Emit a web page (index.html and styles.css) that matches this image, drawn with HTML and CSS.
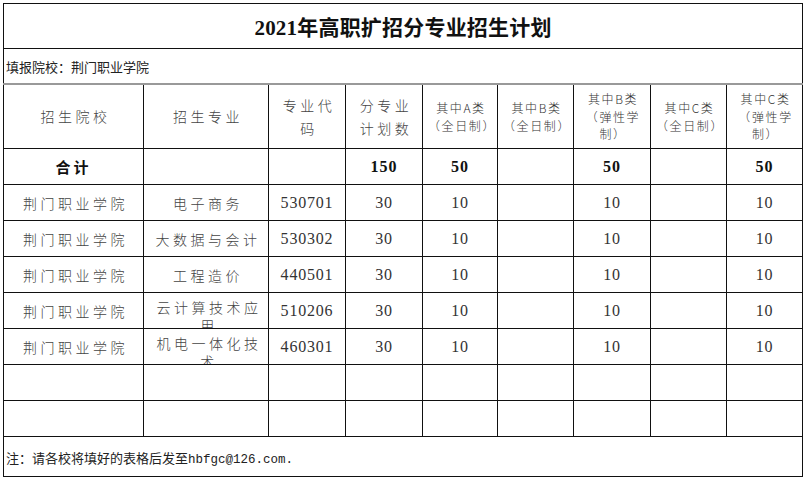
FILE: index.html
```html
<!DOCTYPE html>
<html lang="zh">
<head>
<meta charset="utf-8">
<title>2021年高职扩招分专业招生计划</title>
<link rel="stylesheet" href="styles.css">
</head>
<body>
<div class="sheet">
<table class="plan">
  <colgroup>
    <col class="c1"><col class="c2"><col class="c3"><col class="c4"><col class="c5">
    <col class="c6"><col class="c7"><col class="c8"><col class="c9">
  </colgroup>
  <tr class="r-title"><td colspan="9" class="title">2021年高职扩招分专业招生计划</td></tr>
  <tr class="r-fill"><td colspan="9" class="fill">填报院校：荆门职业学院</td></tr>
  <tr class="r-head">
    <td class="hd">招生院校</td>
    <td class="hd g">招生专业</td>
    <td class="hd g">专业代码</td>
    <td class="hd">分专业计划数</td>
    <td class="hs">其中A类（全日制）</td>
    <td class="hs g">其中B类（全日制）</td>
    <td class="hs g">其中B类（弹性学制）</td>
    <td class="hs">其中C类（全日制）</td>
    <td class="hs">其中C类（弹性学制）</td>
  </tr>
  <tr class="r-row">
    <td class="sum-label">合计</td><td class="g"></td><td class="g"></td>
    <td class="sum">150</td><td class="sum">50</td><td class="g"></td><td class="sum g">50</td><td></td><td class="sum">50</td>
  </tr>
  <tr class="r-row">
    <td class="txt">荆门职业学院</td><td class="txt g">电子商务</td><td class="num g">530701</td>
    <td class="num">30</td><td class="num">10</td><td class="g"></td><td class="num g">10</td><td></td><td class="num">10</td>
  </tr>
  <tr class="r-row">
    <td class="txt">荆门职业学院</td><td class="txt g">大数据与会计</td><td class="num g">530302</td>
    <td class="num">30</td><td class="num">10</td><td class="g"></td><td class="num g">10</td><td></td><td class="num">10</td>
  </tr>
  <tr class="r-row">
    <td class="txt">荆门职业学院</td><td class="txt g">工程造价</td><td class="num g">440501</td>
    <td class="num">30</td><td class="num">10</td><td class="g"></td><td class="num g">10</td><td></td><td class="num">10</td>
  </tr>
  <tr class="r-row">
    <td class="txt">荆门职业学院</td><td class="txt g"><div class="clip">云计算技术应用</div></td><td class="num g">510206</td>
    <td class="num">30</td><td class="num">10</td><td class="g"></td><td class="num g">10</td><td></td><td class="num">10</td>
  </tr>
  <tr class="r-row">
    <td class="txt">荆门职业学院</td><td class="txt g"><div class="clip">机电一体化技术</div></td><td class="num g">460301</td>
    <td class="num">30</td><td class="num">10</td><td class="g"></td><td class="num g">10</td><td></td><td class="num">10</td>
  </tr>
  <tr class="r-row">
    <td></td><td class="g"></td><td class="g"></td><td></td><td></td><td class="g"></td><td class="g"></td><td></td><td></td>
  </tr>
  <tr class="r-row">
    <td></td><td class="g"></td><td class="g"></td><td></td><td></td><td class="g"></td><td class="g"></td><td></td><td></td>
  </tr>
  <tr class="r-foot"><td colspan="9" class="note">注：请各校将填好的表格后发至<span class="mail">hbfgc@126.com.</span></td></tr>
</table>
</div>
</body>
</html>
```

FILE: styles.css
```css
html, body {
  margin: 0;
  padding: 0;
  background: #fff;
}
.sheet {
  padding: 3px 0 0 3px;
}
.plan {
  border-collapse: collapse;
  table-layout: fixed;
  width: 799px;
  color: #3a3a3a;
  font-family: "Noto Sans CJK SC", sans-serif;
}
.c1 { width: 140px; }
.c2 { width: 125px; }
.c3 { width: 77px; }
.c4 { width: 77px; }
.c5 { width: 75px; }
.c6 { width: 76px; }
.c7 { width: 77px; }
.c8 { width: 76px; }
.c9 { width: 76px; }

.plan td {
  border: 1px solid #111;
  padding: 0;
  text-align: center;
  vertical-align: middle;
  overflow: hidden;
}
.plan td.g {
  border-left-color: #888;
}
.plan td.g + td {
  border-left-color: #888;
}

.r-title td { height: 44px; }
.r-fill td { height: 34px; }
.r-head td { height: 63px; border-top: 2px solid #999; }
.r-row td { height: 35px; }
.r-foot td { height: 37px; }

.title {
  font-family: "Liberation Serif", "Noto Sans CJK SC", serif;
  font-weight: 700;
  font-size: 21px;
  color: #111;
  letter-spacing: 0.2px;
}
.fill, .note {
  text-align: left !important;
  font-size: 13px;
  color: #222;
  padding-left: 2px !important;
}
.note {
  padding-top: 2px !important;
}
.mail {
  font-family: "Liberation Mono", monospace;
  font-size: 12.5px;
}

.hd {
  font-size: 14px;
  letter-spacing: 3.5px;
  line-height: 23px;
  font-weight: 300;
  padding: 0 6px 0 10px !important;
  color: #444;
}
.hs {
  font-size: 12px;
  letter-spacing: 1.6px;
  line-height: 17.5px;
  font-weight: 300;
  padding: 0 3px 0 5px !important;
  color: #333;
}
.sum-label {
  font-size: 15px;
  font-weight: 700;
  letter-spacing: 3px;
  color: #111;
}
.sum {
  font-family: "Liberation Serif", serif;
  font-size: 16px;
  font-weight: 700;
  letter-spacing: 1px;
  color: #111;
}
.txt {
  font-size: 14px;
  letter-spacing: 3.5px;
  font-weight: 300;
  color: #444;
  padding-left: 4px !important;
}
.num {
  font-family: "Liberation Serif", serif;
  font-size: 16px;
  letter-spacing: 0.8px;
  color: #333;
}
.clip {
  height: 35px;
  overflow: hidden;
  line-height: 18px;
  padding: 5px 4px 0 6px;
  box-sizing: border-box;
}
```
